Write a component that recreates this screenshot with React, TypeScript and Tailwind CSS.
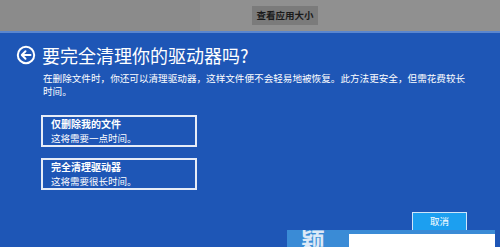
import React from "react";

export default function App() {
  const font = { fontFamily: '"Noto Sans CJK SC", "Noto Sans", sans-serif' };
  return (
    <div className="relative w-[500px] h-[247px] overflow-hidden bg-[#1e56b6]" style={font}>
      <div className="flex h-[31px] bg-[#909090]">
        <div className="w-[200px] h-full bg-[#8b8b8b]" />
        <div className="flex-1 h-full pt-[6px] pl-[52px]">
          <div className="w-[66px] h-[19px] bg-[#7b7b7b] flex items-center justify-center text-[9.5px] font-bold text-[#1a1a1a] leading-none">
            查看应用大小
          </div>
        </div>
      </div>
      <div className="h-[2px] bg-[#5a86cf]" />
      <div className="pl-[16px] pt-[11px]">
        <div className="flex items-center gap-[6px]">
          <svg width="20" height="20" viewBox="0 0 20 20" fill="none" stroke="white" strokeWidth="2">
            <circle cx="10" cy="10" r="8.2" />
            <path d="M14.5 10H6M9.5 6.3L5.8 10l3.7 3.7" strokeLinecap="round" strokeLinejoin="round" />
          </svg>
          <div className="text-white text-[18px] leading-[22px]">要完全清理你的驱动器吗?</div>
        </div>
        <div className="pl-[27px] pt-[6px] text-white text-[9.6px] leading-[13px] w-[450px]">
          在删除文件时，你还可以清理驱动器，这样文件便不会轻易地被恢复。此方法更安全，但需花费较长时间。
        </div>
        <div className="pl-[25px] pt-[17px] flex flex-col gap-[11px]">
          <div className="w-[156px] h-[32px] border-2 border-[#e6ecf7] px-[8px] text-white leading-[14px]">
            <div className="text-[10px] font-bold">仅删除我的文件</div>
            <div className="text-[9.5px]">这将需要一点时间。</div>
          </div>
          <div className="w-[156px] h-[32px] border-2 border-[#e6ecf7] px-[8px] text-white leading-[14px]">
            <div className="text-[10px] font-bold">完全清理驱动器</div>
            <div className="text-[9.5px]">这将需要很长时间。</div>
          </div>
        </div>
        <div className="flex justify-end pr-[33px] pt-[22px]">
          <div className="w-[55px] h-[20px] bg-[#1c9ff0] border border-[#cfe6fb] flex items-center justify-center text-white text-[9.5px] leading-none">
            取消
          </div>
        </div>
      </div>
      <div className="absolute left-[287px] top-[230px] w-[208px] h-[17px] bg-[#3a8bd6] overflow-hidden">
        <div className="absolute left-[14px] top-[-2px] text-[#dce9f7] text-[24px] font-bold leading-none" style={{ fontFamily: '"Noto Sans CJK SC", serif' }}>
          颖
        </div>
        <div className="absolute left-[62px] top-[4px] w-[146px] h-[14px] bg-white" />
      </div>
    </div>
  );
}
